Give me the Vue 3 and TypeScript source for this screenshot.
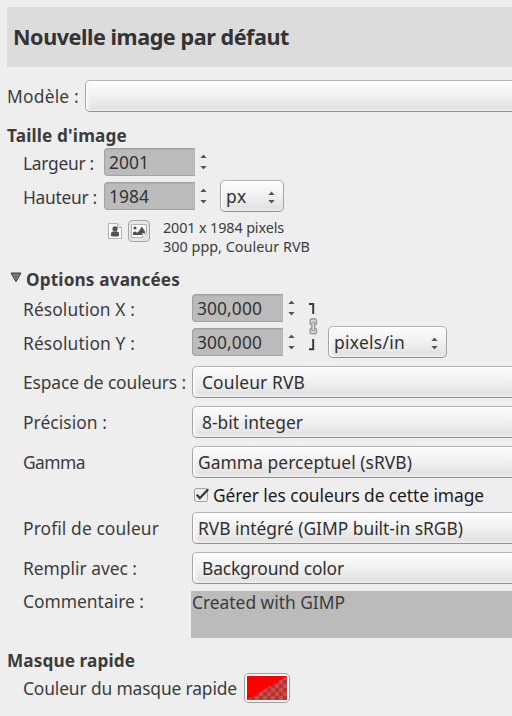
<script setup lang="ts">
import type { Directive } from 'vue'

interface Choice {
  id: string
  label: string
  labelWidth: number
  value: string
  valueWidth: number
  inset: boolean
}

// Tracks a run of text so that it occupies the given width in pixels.
const vFit: Directive<HTMLElement, number> = {
  mounted(el, binding) {
    const count = (el.textContent ?? '').length
    const natural = el.getBoundingClientRect().width
    if (count > 0) el.style.letterSpacing = `${(binding.value - natural) / count}px`
  },
}

const before: Choice[] = [
  { id: 'space', label: 'Espace de couleurs :', labelWidth: 163, value: 'Couleur RVB', valueWidth: 103, inset: true },
  { id: 'precision', label: 'Précision :', labelWidth: 84, value: '8-bit integer', valueWidth: 101, inset: true },
  { id: 'gamma', label: 'Gamma', labelWidth: 62, value: 'Gamma perceptuel (sRVB)', valueWidth: 214, inset: false },
]
const after: Choice[] = [
  { id: 'profile', label: 'Profil de couleur', labelWidth: 136, value: 'RVB intégré (GIMP built-in sRGB)', valueWidth: 265, inset: false },
  { id: 'fill', label: 'Remplir avec :', labelWidth: 114, value: 'Background color', valueWidth: 142, inset: true },
]
</script>

<template>
  <main class="dialog">
    <header class="banner"><h1 v-fit="276">Nouvelle image par défaut</h1></header>

    <div class="row template-row">
      <label class="text"><span v-fit="72">Modèle :</span></label>
      <button class="combo wide"></button>
    </div>

    <h2 class="size-title"><span v-fit="120">Taille d'image</span></h2>
    <div class="row size-row">
      <label class="size-label text"><span v-fit="71">Largeur :</span></label>
      <div class="entry"><span v-fit="40">2001</span></div>
      <svg class="arrows" width="7" height="16" viewBox="0 0 7 16"><path d="M0.3 4 3.5 0.5 6.7 4ZM0.3 12 3.5 15.5 6.7 12Z" /></svg>
    </div>
    <div class="row size-row second">
      <label class="size-label text"><span v-fit="74">Hauteur :</span></label>
      <div class="entry"><span v-fit="40">1984</span></div>
      <svg class="arrows" width="7" height="16" viewBox="0 0 7 16"><path d="M0.3 4 3.5 0.5 6.7 4ZM0.3 12 3.5 15.5 6.7 12Z" /></svg>
      <button class="combo unit px"><span v-fit="21">px</span>
        <svg width="7" height="13" viewBox="0 0 7 13"><path d="M0.3 4 3.5 0.5 6.7 4ZM0.3 9 3.5 12.5 6.7 9Z" /></svg>
      </button>
    </div>

    <div class="orientation">
      <svg class="portrait" width="14" height="16" viewBox="0 0 14 16">
        <path d="M0.5 0.5h9l4 4v11h-13Z" fill="#fafafa" stroke="#b2b2b2" />
        <path d="M9.5 0.5v4h4" fill="#eee" stroke="#b2b2b2" />
        <circle cx="7" cy="5.8" r="2.6" fill="#50534d" />
        <path d="M3 13V10.5Q3 8.6 5 8.5H9Q11 8.6 11 10.5V13Q7 14 3 13Z" fill="#50534d" />
      </svg>
      <button class="landscape">
        <svg width="16" height="14" viewBox="0 0 16 14">
          <path d="M0.5 0.5h15v9l-4 4h-11Z" fill="#fafafa" stroke="#b2b2b2" />
          <circle cx="4" cy="4" r="1.6" fill="#50534d" />
          <path d="M2 10.5V8.5Q4 6.8 5.7 8.4Q7 8.8 8 7L10.8 2.5L14 7.5V9H11V11H2Z" fill="#50534d" />
          <path d="M11.5 13.5v-4h4" fill="#f5f5f5" stroke="#b2b2b2" />
        </svg>
      </button>
      <div class="summary">
        <div><span v-fit="121">2001 x 1984 pixels</span></div>
        <div><span v-fit="147">300 ppp, Couleur RVB</span></div>
      </div>
    </div>

    <h2 class="options-title">
      <svg width="12" height="11" viewBox="0 0 12 11"><path d="M1 1H11L6 9.7Z" fill="#777" stroke="#3c3c3c" /></svg>
      <span v-fit="154">Options avancées</span>
    </h2>
    <div class="resolution">
      <div class="res-fields">
        <div class="row res-row">
          <label class="label text"><span v-fit="112">Résolution X :</span></label>
          <div class="entry"><span v-fit="65">300,000</span></div>
          <svg class="arrows" width="7" height="16" viewBox="0 0 7 16"><path d="M0.3 4 3.5 0.5 6.7 4ZM0.3 12 3.5 15.5 6.7 12Z" /></svg>
        </div>
        <div class="row res-row">
          <label class="label text"><span v-fit="112">Résolution Y :</span></label>
          <div class="entry"><span v-fit="65">300,000</span></div>
          <svg class="arrows" width="7" height="16" viewBox="0 0 7 16"><path d="M0.3 4 3.5 0.5 6.7 4ZM0.3 12 3.5 15.5 6.7 12Z" /></svg>
        </div>
      </div>
      <svg class="chain" width="9" height="48" viewBox="0 0 9 48">
        <path d="M0 1H4.2V11M0 46.2H4.2V36" fill="none" stroke="#3c3c3c" stroke-width="2" />
        <g fill="#dadada" stroke="#a2a2a2" stroke-width="1.6">
          <rect x="1.2" y="15.9" width="6.2" height="5.8" rx="1.8" />
          <rect x="1.2" y="25" width="6.2" height="5.8" rx="1.8" />
          <rect x="2.9" y="19" width="2.8" height="8.8" rx="1.2" stroke="#8e8e8e" stroke-width="1" />
        </g>
      </svg>
      <button class="combo unit res-unit"><span v-fit="71">pixels/in</span>
        <svg width="7" height="13" viewBox="0 0 7 13"><path d="M0.3 4 3.5 0.5 6.7 4ZM0.3 9 3.5 12.5 6.7 9Z" /></svg>
      </button>
    </div>

    <div class="choices">
      <div v-for="c in before" :key="c.id" class="row">
        <label class="label text"><span v-fit="c.labelWidth">{{ c.label }}</span></label>
        <button class="combo wide" :class="{ inset: c.inset }"><span v-fit="c.valueWidth">{{ c.value }}</span></button>
      </div>
    </div>
    <div class="check-row">
      <svg width="17" height="16" viewBox="0 0 17 16">
        <rect x="1.5" y="1.5" width="13" height="13" rx="2" fill="#ececec" stroke="#a2a2a2" />
        <path d="M3.8 7.6 6.8 11.2 15.2 2.2" fill="none" stroke="#333" stroke-width="2.2" />
      </svg>
      <span v-fit="271">Gérer les couleurs de cette image</span>
    </div>
    <div class="choices last">
      <div v-for="c in after" :key="c.id" class="row">
        <label class="label text"><span v-fit="c.labelWidth">{{ c.label }}</span></label>
        <button class="combo wide" :class="{ inset: c.inset }"><span v-fit="c.valueWidth">{{ c.value }}</span></button>
      </div>
    </div>
    <div class="comment">
      <label class="label text"><span v-fit="121">Commentaire :</span></label>
      <div class="comment-box"><span v-fit="153">Created with GIMP</span></div>
    </div>

    <h2 class="mask-title"><span v-fit="128">Masque rapide</span></h2>
    <div class="mask-row">
      <label class="text"><span v-fit="214">Couleur du masque rapide</span></label>
      <button class="swatch">
        <svg width="40" height="24" viewBox="0 0 40 24">
          <defs>
            <pattern id="checks" width="8" height="8" patternUnits="userSpaceOnUse">
              <rect width="8" height="8" fill="#cc4c4c" />
              <path d="M0 0h4v4h-4ZM4 4h4v4h-4Z" fill="#b23333" />
            </pattern>
          </defs>
          <rect width="40" height="24" fill="url(#checks)" />
          <path d="M0 0H40L0 24Z" fill="#f00" />
        </svg>
      </button>
    </div>
  </main>
</template>

<style>
body { margin: 0; background: #eee; overflow: hidden; }
</style>

<style scoped>
* { box-sizing: border-box; }
.dialog { width: 512px; height: 716px; padding: 7px 0 0 7px; overflow: hidden; background: #eee; color: #3c3c3c; font: 17.4px/24px "Noto Sans", "Open Sans", sans-serif; }
svg { display: block; flex: none; }
span, h1 { display: inline-block; white-space: pre; }
h1, h2 { margin: 0; }
h2 { font-size: 17.2px; line-height: 24px; font-weight: 700; height: 24px; }
button { font: inherit; color: #303030; margin: 0; }
.banner { height: 60px; background: #dcdcdc; padding: 0 6px; display: flex; align-items: center; }
h1 { font-size: 21.6px; line-height: 30px; color: #333; }
.row { display: flex; align-items: center; height: 32px; }
.text { flex: none; }
.label { width: 169px; padding-left: 16px; }
.combo { height: 32px; display: flex; align-items: center; padding: 0 5px; border: 1px solid #a5a5a5; border-color: #b5b5b5 #a5a5a5 #929292; border-radius: 5px; background: linear-gradient(#fdfdfd, #f2f2f2 45%, #dfdfdf); box-shadow: inset 1px 1px 0 #fff, inset 3px -1px 3px #f5f5f5; flex: none; text-align: left; }
.combo.wide { flex: 1; margin-right: -8px; }
.combo.inset { padding-left: 9px; }
.template-row { margin-top: 13px; }
.template-row .text { width: 78px; }
.size-title { margin-top: 12px; }
.size-row { height: 28px; padding-left: 16px; }
.size-row.second { margin-top: 6px; }
.size-label { width: 81px; padding-top: 2px; }
.entry { width: 91px; height: 28px; padding-left: 4px; display: flex; align-items: center; background: #bbb; border: 1px solid #a3a3a3; border-right: 0; border-radius: 4px 0 0 4px; box-shadow: inset 0 1px 1px #aeaeae; color: #333; flex: none; }
.arrows { margin-left: 5px; fill: #555; }
.unit { justify-content: space-between; padding-right: 8px; }
.unit svg { fill: #555; margin-top: 3px; }
.px { width: 64px; margin-left: 13px; }
.orientation { display: flex; margin-top: 9px; padding-left: 101px; height: 44px; align-items: flex-start; }
.portrait { margin-top: 4px; }
.landscape { width: 22px; height: 22px; margin: 1px 13px 0 6px; padding: 0; border: 1px solid #a6a6a6; border-radius: 4px; background: #e5e5e5; display: flex; align-items: center; justify-content: center; flex: none; }
.summary { font-size: 14.4px; line-height: 19px; margin-top: -1px; }
.summary div { height: 19px; }
.options-title { display: flex; margin-top: 5px; height: 24px; }
.options-title svg { margin: 4px 4px 0 3px; }
.resolution { display: flex; margin-top: 2px; height: 64px; align-items: flex-start; }
.res-fields { display: flex; flex-direction: column; gap: 6px; }
.res-row { height: 28px; }
.res-row .text { padding-top: 2px; }
.res-row .label { width: 185px; }
.chain { margin: 9px 0 0 14px; }
.res-unit { width: 119px; margin: 32px 0 0 10px; }
.choices { display: flex; flex-direction: column; gap: 8px; margin-top: 8px; }
.choices .label, .comment .label { width: 185px; }
.check-row { height: 34px; display: flex; align-items: center; padding-left: 186px; color: #1b1b1b; }
.check-row span { margin-left: 3px; }
.choices.last { margin-top: 0; }
.comment { display: flex; margin-top: 7px; height: 47px; align-items: flex-start; }
.comment .text { margin-top: -2px; }
.comment .label { width: 184px; }
.comment-box { flex: 1; height: 47px; background: #bbb; padding-left: 1px; line-height: 22px; }
.mask-title { margin-top: 11px; }
.mask-row { display: flex; align-items: center; padding-left: 16px; height: 30px; }
.mask-row .text { width: 221px; }
.swatch { width: 46px; height: 30px; padding: 0; border: 1px solid #9d9d9d; border-radius: 5px; background: #fafafa; display: flex; align-items: center; justify-content: center; }
</style>
